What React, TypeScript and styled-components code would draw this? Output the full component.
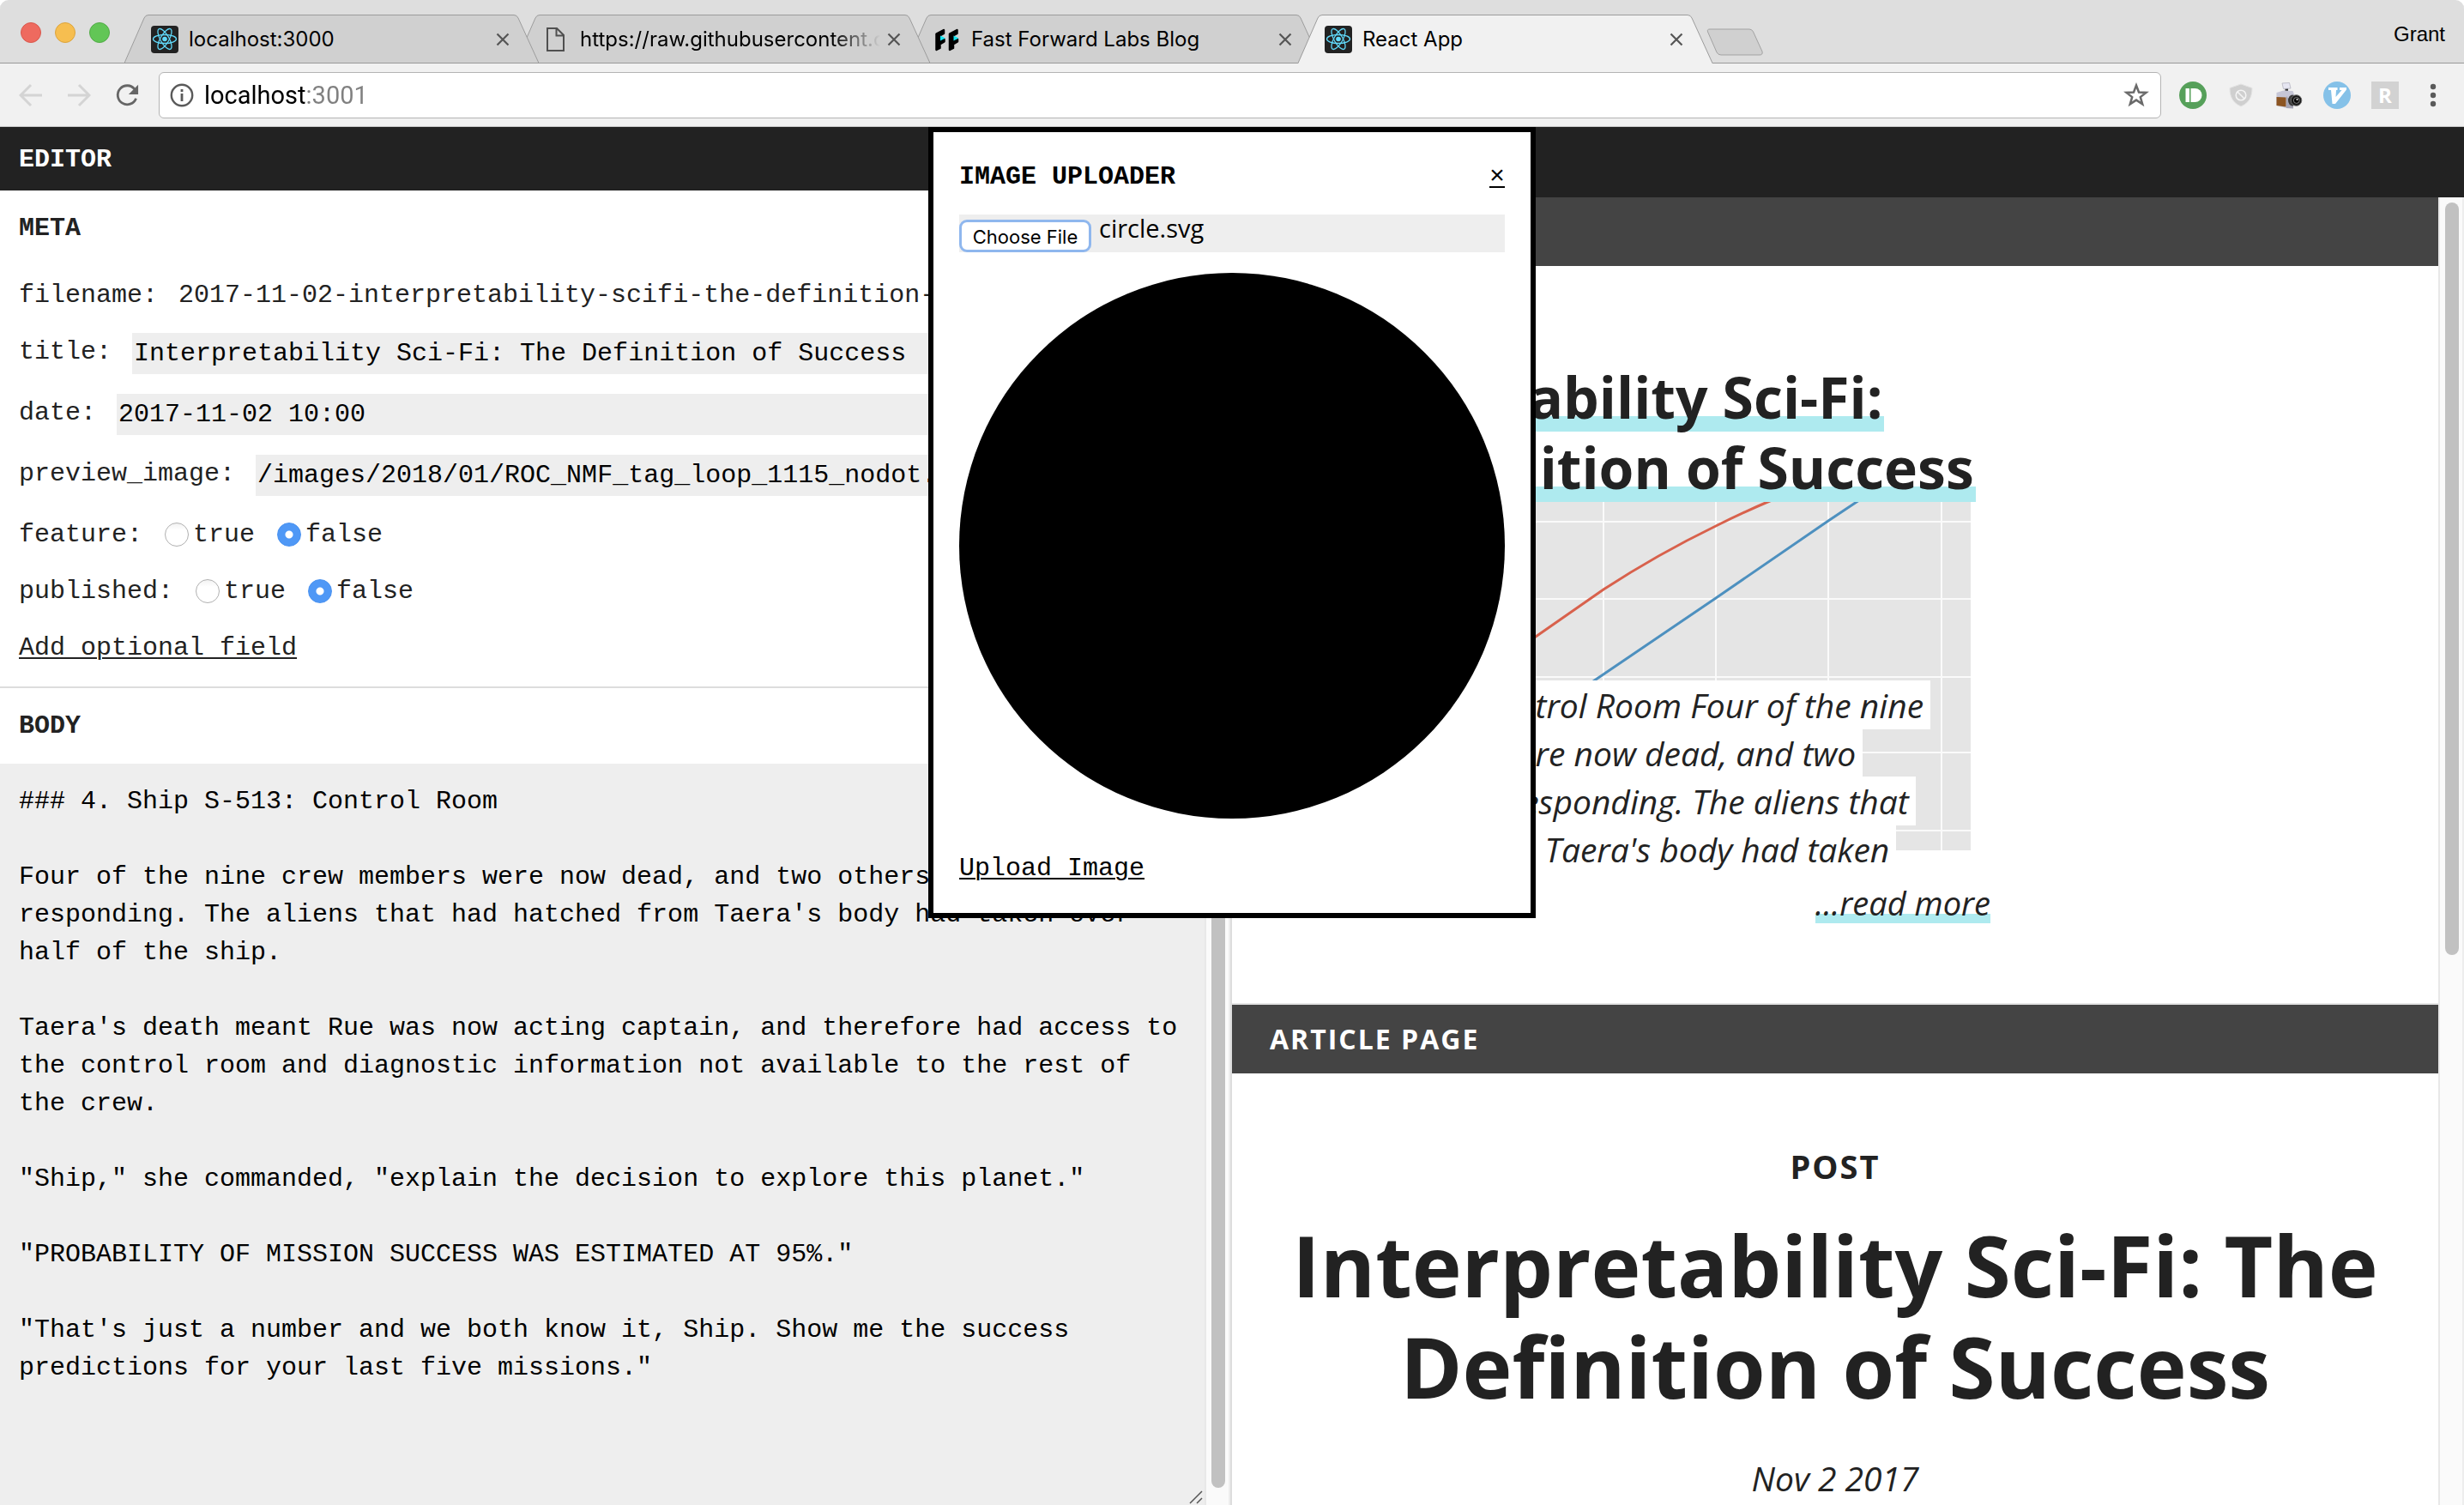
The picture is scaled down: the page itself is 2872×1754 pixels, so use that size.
import React, { useState } from "react";
import styled, { createGlobalStyle, css } from "styled-components";

const mono = '"Liberation Mono", "Courier New", monospace';
const sans = '"Open Sans", "Noto Sans", sans-serif';
const ui = 'Inter, Roboto, "Liberation Sans", sans-serif';

const GlobalStyle = createGlobalStyle`
  *, *::before, *::after { box-sizing: border-box; }
  html, body { margin: 0; background: #fff; }
  body { overflow: hidden; }
  h1, h2, h3, p { margin: 0; }
  button, input, textarea { font: inherit; color: inherit; margin: 0; }
`;

/* ---------- browser frame ---------- */

const Window = styled.div`
  display: grid;
  grid-template-rows: 74px 74px minmax(0, 1fr);
  height: 100vh;
  background: #fff;
`;

const TabStrip = styled.header`
  display: flex;
  align-items: flex-end;
  padding: 0 22px 0 24px;
  background: #dedede;
  border-radius: 10px 10px 0 0;
  box-shadow: inset 0 -1px 0 #999;
`;

const TrafficLights = styled.div`
  display: flex;
  gap: 16px;
  align-self: flex-start;
  padding: 26px 17px 0 0;
  width: 121px;
`;

const Light = styled.button<{ $fill: string; $edge: string }>`
  width: 24px;
  height: 24px;
  padding: 0;
  flex: none;
  border-radius: 50%;
  border: 1px solid ${(p) => p.$edge};
  background: ${(p) => p.$fill};
`;

const TabList = styled.nav`
  display: flex;
  flex: 1;
  min-width: 0;
  align-items: flex-end;
`;

const TabItem = styled.div<{ $active?: boolean; $order: number }>`
  position: relative;
  z-index: ${(p) => p.$order};
  display: flex;
  align-items: center;
  flex: 0 1 483px;
  min-width: 0;
  height: 57px;
  margin-right: -27px;
  padding: 0 34px 0 31px;
  font: 24px/32px ${ui};
  color: #000;
`;

const TabShape = styled.svg`
  position: absolute;
  inset: 0;
  width: 100%;
  height: 57px;
`;

const TabIcon = styled.span`
  position: relative;
  display: flex;
  flex: none;
  width: 32px;
  height: 32px;
  margin-right: 12px;
`;

const TabTitle = styled.span<{ $fade?: boolean }>`
  position: relative;
  flex: 1;
  min-width: 0;
  overflow: hidden;
  white-space: nowrap;
  ${(p) =>
    p.$fade &&
    css`
      mask-image: linear-gradient(to right, #000 calc(100% - 56px), transparent);
    `}
`;

const CloseTab = styled.button`
  position: relative;
  flex: none;
  display: flex;
  width: 16px;
  height: 16px;
  margin-left: 8px;
  padding: 0;
  border: 0;
  background: none;
`;

const NewTab = styled.button`
  display: flex;
  flex: none;
  margin: 0 0 9px 20px;
  padding: 0;
  border: 0;
  background: none;
`;

const Profile = styled.span`
  align-self: flex-start;
  padding-top: 24px;
  font: 24px/32px "Liberation Sans", Arial, sans-serif;
  color: #000;
`;

const Toolbar = styled.div`
  display: flex;
  align-items: center;
  padding: 0 8px 0 22px;
  background: #f1f1f1;
  border-bottom: 1px solid #c8c8c8;
`;

const IconButton = styled.button<{ $width?: number }>`
  display: flex;
  align-items: center;
  justify-content: center;
  flex: none;
  width: ${(p) => p.$width ?? 56}px;
  height: 32px;
  padding: 0;
  border: 0;
  background: none;
`;

const AddressBar = styled.label`
  display: flex;
  align-items: center;
  flex: 1;
  min-width: 0;
  height: 54px;
  padding: 0 13px 0 12px;
  margin: 0 9px 0 23px;
  border: 1px solid #b4b4b4;
  border-radius: 6px;
  background: #fff;
`;

const AddressInput = styled.input`
  flex: 1;
  min-width: 0;
  padding: 0;
  margin-left: 12px;
  border: 0;
  outline: 0;
  font: 29px/40px Roboto, Inter, sans-serif;
  color: transparent;
  background: linear-gradient(to right, #000 119px, #808080 119px);
  background-clip: text;
  -webkit-background-clip: text;
`;

/* ---------- page ---------- */

const Page = styled.main`
  position: relative;
  display: grid;
  grid-template-columns: minmax(0, 1fr) minmax(0, 1fr);
  min-height: 0;
`;

const Pane = styled.section<{ $divided?: boolean }>`
  display: flex;
  flex-direction: column;
  min-width: 0;
  min-height: 0;
  ${(p) =>
    p.$divided &&
    css`
      border-right: 2px solid #ddd;
    `}
`;

const EditorHeader = styled.h1`
  flex: none;
  padding: 16px 22px 14px;
  font: bold 30px/44px ${mono};
  color: #fff;
  background: #222;
  margin-right: -2px;
`;

const PreviewHeader = styled.div`
  flex: none;
  height: 82px;
  background: #222;
`;

const Scroller = styled.div`
  display: flex;
  flex: 1;
  min-height: 0;
`;

const ScrollContent = styled.div`
  display: flex;
  flex-direction: column;
  flex: 1;
  min-width: 0;
  overflow: hidden;
`;

const Track = styled.div`
  flex: none;
  width: 30px;
  padding: 6px;
  border-left: 2px solid #e8e8e8;
  border-right: 2px solid #ededed;
  background: #fafafa;
`;

const Thumb = styled.div<{ $length: string }>`
  width: 16px;
  height: ${(p) => p.$length};
  border-radius: 8px;
  background: #c1c1c1;
`;

const MetaSection = styled.section`
  flex: none;
  padding: 22px 22px 23px;
  border-bottom: 2px solid #ddd;
  font: 30px/44px ${mono};
  color: #222;
`;

const SectionTitle = styled.h2<{ $space: number }>`
  font: bold 30px/44px ${mono};
  color: #222;
  margin-bottom: ${(p) => p.$space}px;
`;

const FieldList = styled.form`
  display: flex;
  flex-direction: column;
  align-items: stretch;
  gap: 22px;
`;

const Field = styled.div`
  display: flex;
  gap: 24px;
  white-space: nowrap;
  overflow: hidden;
`;

const InputField = styled(Field)`
  height: 49px;
`;

const TextInput = styled.input`
  flex: 1;
  min-width: 0;
  height: 48px;
  padding: 2px;
  border: 0;
  outline: 0;
  background: #eee;
  color: #000;
`;

const RadioGroup = styled.fieldset`
  display: flex;
  align-items: center;
  gap: 26px;
  margin: 0;
  padding: 0;
  border: 0;
`;

const RadioLegend = styled.legend`
  float: left;
  padding: 0;
`;

const RadioLabel = styled.label`
  display: flex;
  align-items: center;
  gap: 5px;
`;

const Radio = styled.input`
  appearance: none;
  width: 28px;
  height: 28px;
  border: 1px solid #b0b0b0;
  border-radius: 50%;
  background: linear-gradient(#f2f2f2, #fff 30%);
  &:checked {
    border-color: #4a92f0;
    background: radial-gradient(circle, #fff 4px, #4f98f6 5px);
  }
`;

const TextButton = styled.button`
  align-self: flex-start;
  padding: 0;
  border: 0;
  background: none;
  font: 30px/44px ${mono};
  text-decoration: underline;
  text-decoration-thickness: 2px;
  text-underline-offset: 3px;
  cursor: pointer;
`;

const BodySection = styled.section`
  display: flex;
  flex-direction: column;
  flex: 1;
  min-height: 0;
`;

const BodyTitle = styled.div`
  padding: 22px 22px 0;
`;

const BodyEditor = styled.div`
  position: relative;
  display: flex;
  flex: 1;
  min-height: 0;
`;

const BodyText = styled.textarea`
  flex: 1;
  padding: 22px;
  border: 0;
  outline: 0;
  resize: none;
  overflow: hidden;
  background: #eee;
  font: 30px/44px ${mono};
  color: #000;
`;

const ResizeGrip = styled.svg`
  position: absolute;
  right: 2px;
  bottom: 1px;
`;

/* ---------- preview ---------- */

const PreviewCard = styled.article`
  position: relative;
  flex: none;
  padding: 111px 44px 91px;
  border-bottom: 2px solid #e5e5e5;
  font-family: ${sans};
  color: #222;
`;

const CardInner = styled.div`
  max-width: 840px;
`;

const Chart = styled.svg`
  position: absolute;
  left: 44px;
  top: 214px;
`;

const CardTitle = styled.h2`
  position: relative;
  margin-bottom: 209px;
  font: bold 66px/82px ${sans};
  white-space: nowrap;
`;

const Underlined = styled.span`
  padding-right: 2px;
  background: linear-gradient(
    transparent 16px,
    #fff 16px,
    #fff 68px,
    #aeeaef 68px,
    #aeeaef 86px,
    transparent 86px
  );
  box-decoration-break: clone;
  -webkit-box-decoration-break: clone;
`;

const Excerpt = styled.p`
  position: relative;
  font: italic 39px/56px ${sans};
  white-space: nowrap;
`;

const Highlight = styled.span`
  padding: 2px 8px 2px 0;
  background: #fff;
  box-decoration-break: clone;
  -webkit-box-decoration-break: clone;
`;

const MoreRow = styled.div`
  display: flex;
  justify-content: flex-end;
  margin-top: 8px;
  font: italic 38px/52px ${sans};
`;

const MoreLink = styled.a`
  color: #222;
  text-decoration: none;
  background: linear-gradient(
    transparent 39px,
    #aeeaef 39px,
    #aeeaef 50px,
    transparent 50px
  );
`;

const ArticleHeader = styled.h2`
  flex: none;
  height: 80px;
  padding: 0 44px;
  font: bold 32px/80px ${sans};
  letter-spacing: 2px;
  color: #fff;
  background: #444;
`;

const SubHeader = styled.div`
  flex: none;
  height: 80px;
  background: #444;
`;

const Article = styled.article`
  flex: none;
  padding: 86px 44px;
  text-align: center;
  color: #222;
`;

const Kicker = styled.p`
  font: bold 38px/44px ${sans};
  letter-spacing: 2px;
`;

const ArticleTitle = styled.h1`
  margin: 34px 0 44px;
  font: bold 98px/118px ${sans};
`;

const Dateline = styled.p`
  font: italic 39px/56px ${sans};
`;

/* ---------- dialog ---------- */

const Dialog = styled.div`
  position: absolute;
  top: 0;
  left: 50%;
  width: 708px;
  margin-left: -354px;
  padding: 30px;
  border: 6px solid #000;
  background: #fff;
  color: #000;
  font: 30px/44px ${mono};
  z-index: 10;
`;

const DialogHead = styled.div`
  display: flex;
  justify-content: space-between;
  margin-bottom: 22px;
`;

const DialogTitle = styled.h2`
  font: bold 30px/44px ${mono};
`;

const FileRow = styled.div`
  display: flex;
  align-items: flex-start;
  gap: 9px;
  height: 44px;
  margin-bottom: 24px;
  background: #eee;
`;

const HiddenFile = styled.input`
  position: absolute;
  width: 1px;
  height: 1px;
  opacity: 0;
`;

const FileButton = styled.label`
  width: 154px;
  height: 38px;
  margin-top: 6px;
  border: 3px solid #8fb7ee;
  border-radius: 9px;
  background: #fff;
  font: 22px/34px ${ui};
  text-align: center;
`;

const FileName = styled.span`
  font: 29px/32px ${sans};
`;

const Figure = styled.svg`
  display: block;
  width: 100%;
  margin-bottom: 36px;
`;

/* ---------- drawings ---------- */

const ReactMark = () => (
  <svg width="32" height="32" viewBox="0 0 32 32" aria-hidden="true">
    <rect width="32" height="32" rx="4" fill="#222" />
    <g fill="none" stroke="#61dafb" strokeWidth="1.3">
      <ellipse cx="16" cy="15.5" rx="13.5" ry="5" />
      <ellipse cx="16" cy="15.5" rx="13.5" ry="5" transform="rotate(60 16 15.5)" />
      <ellipse cx="16" cy="15.5" rx="13.5" ry="5" transform="rotate(120 16 15.5)" />
    </g>
    <circle cx="16" cy="15.5" r="2.8" fill="#61dafb" />
  </svg>
);

const PageMark = () => (
  <svg width="32" height="32" viewBox="0 0 32 32" aria-hidden="true">
    <path d="M6 3h11l8 8v18H6z M16.5 3v8.500h8" fill="none" stroke="#505050" strokeWidth="2" />
  </svg>
);

const ForwardMark = () => (
  <svg width="32" height="32" viewBox="0 0 32 32" aria-hidden="true">
    {[0, 15.5].map((x) => (
      <g key={x} transform={`translate(${x} 0)`}>
        <path
          d="M3.500 9.500L12 5v4L7.500 11.500V18l5-2v2.500l-5 3V26L3.500 28z"
          fill="#000"
          stroke="#000"
          strokeWidth="2.500"
          strokeLinejoin="round"
        />
        <path d="M8 11.500l6 3-6 3z" fill="#14e3ee" />
      </g>
    ))}
  </svg>
);

const CrossMark = () => (
  <svg width="16" height="16" viewBox="0 0 16 16" aria-hidden="true">
    <path d="M1.5 1.5l13 13M14.5 1.5l-13 13" stroke="#555" strokeWidth="2.2" />
  </svg>
);

const Arrow = ({ flip }: { flip?: boolean }) => (
  <svg width="28" height="28" viewBox="0 0 28 28" aria-hidden="true">
    <path
      d={flip ? "M1 14h25M14 2l12 12-12 12" : "M27 14H2M14 2L2 14l12 12"}
      fill="none"
      stroke="#d4d4d4"
      strokeWidth="3"
    />
  </svg>
);

const ReloadMark = () => (
  <svg width="30" height="30" viewBox="0 0 30 30" aria-hidden="true">
    <path d="M24.6 7.5A11.8 11.8 0 1 0 26.3 19" fill="none" stroke="#666" strokeWidth="3" />
    <path d="M29 2v12H17z" fill="#666" />
  </svg>
);

const InfoMark = () => (
  <svg width="28" height="28" viewBox="0 0 28 28" aria-hidden="true">
    <circle cx="14" cy="14" r="12.2" fill="none" stroke="#5a5a5a" strokeWidth="2.4" />
    <path d="M14 12v9M14 7v3" stroke="#5a5a5a" strokeWidth="2.8" />
  </svg>
);

const StarMark = () => (
  <svg width="30" height="30" viewBox="0 0 30 30" aria-hidden="true">
    <path
      d="M15 3.5l3 8 8.5.4-6.7 5.2 2.4 8.2L15 20.6l-7.2 4.7 2.4-8.2-6.7-5.2 8.5-.4z"
      fill="none"
      stroke="#6a6a6a"
      strokeWidth="2.5"
    />
  </svg>
);

const PushMark = () => (
  <svg width="32" height="32" viewBox="0 0 32 32" aria-hidden="true">
    <circle cx="16" cy="16" r="16" fill="#56a05a" />
    <rect x="7.5" y="8" width="4.5" height="16" rx=".5" fill="#fff" />
    <path d="M13.500 8h5a8 8 0 0 1 0 16h-5z" fill="#fff" />
  </svg>
);

const ShieldMark = () => (
  <svg width="32" height="32" viewBox="0 0 32 32" aria-hidden="true">
    <path d="M16 3l13 4.500c0 10-3 17-13 21.500C6 24.500 3 17.500 3 7.500z" fill="#cfcfcf" stroke="#e4e4e4" />
    <circle cx="16" cy="16" r="5.800" fill="none" stroke="#f4f4f4" strokeWidth="1.600" />
    <path d="M12 12l8 8" stroke="#f4f4f4" strokeWidth="1.600" />
  </svg>
);

const CameraMark = () => (
  <svg width="32" height="32" viewBox="0 0 32 32" aria-hidden="true">
    <path d="M11.5 8h3.500v4h-3.500z" fill="#333" />
    <path d="M8 2l8.500-.5 1.500 6.500-8.500.5z" fill="#e6e6f2" stroke="#b4b4c0" strokeWidth=".8" />
    <path d="M1.500 13l8-2.500 11 .5 1.500 4-1 15.500-8 .5L1.500 28z" fill="#c6c6d6" />
    <path d="M1.500 18l11 .5v11L1.500 28z" fill="#8c5522" />
    <path d="M13 17v14l8 .5V27z" fill="#a5a5b4" />
    <ellipse cx="20" cy="22" rx="5" ry="6.500" fill="#3a3a3a" />
    <circle cx="24.500" cy="22" r="6.300" fill="#191919" stroke="#6f6f6f" />
    <circle cx="24.800" cy="22" r="3.400" fill="#000" stroke="#9a9a9a" strokeWidth=".8" />
    <circle cx="25.500" cy="21" r="1" fill="#eee" />
  </svg>
);

const VimMark = () => (
  <svg width="32" height="32" viewBox="0 0 32 32" aria-hidden="true">
    <circle cx="16" cy="16" r="16" fill="#85c1e8" />
    <path d="M6 7h10.500v3H15l-.5 8L21.500 10H19V7h8v2.500L14 26h-3.500L9 10H6z" fill="#fff" />
  </svg>
);

const LetterTile = styled.span`
  display: flex;
  align-items: center;
  justify-content: center;
  width: 32px;
  height: 32px;
  background: #d2d2d2;
  color: #fff;
  font: bold 24px/32px ${sans};
`;

const MenuMark = () => (
  <svg width="8" height="28" viewBox="0 0 8 28" aria-hidden="true">
    <g fill="#5a5a5a">
      <circle cx="4" cy="4" r="3.200" />
      <circle cx="4" cy="14" r="3.200" />
      <circle cx="4" cy="24" r="3.200" />
    </g>
  </svg>
);

/* ---------- parts ---------- */

type TabProps = {
  title: string;
  icon: React.ReactNode;
  order: number;
  active?: boolean;
  fade?: boolean;
};

const Tab = ({ title, icon, order, active, fade }: TabProps) => (
  <TabItem $order={order} $active={active}>
    <TabShape viewBox="0 0 483 57" preserveAspectRatio="none" aria-hidden="true">
      <path
        d="M0 57L23 4Q24.500.5 28 .5H454Q457.500.5 459 4L483 57z"
        fill={active ? "#f1f1f1" : "#d0d0d0"}
      />
      <path
        d="M0 56.500L23 4Q24.500.5 28 .5H454Q457.500.5 459 4L483 56.500"
        fill="none"
        stroke="#9c9c9c"
      />
      {!active && <path d="M0 56.500H483" stroke="#999" />}
    </TabShape>
    <TabIcon>{icon}</TabIcon>
    <TabTitle $fade={fade}>{title}</TabTitle>
    <CloseTab aria-label={`Close ${title}`}>
      <CrossMark />
    </CloseTab>
  </TabItem>
);

const BoolField = ({ name }: { name: string }) => {
  const [value, setValue] = useState(false);
  return (
    <RadioGroup>
      <RadioLegend>{name}:</RadioLegend>
      <RadioLabel>
        <Radio type="radio" name={name} checked={value} onChange={() => setValue(true)} />
        true
      </RadioLabel>
      <RadioLabel>
        <Radio type="radio" name={name} checked={!value} onChange={() => setValue(false)} />
        false
      </RadioLabel>
    </RadioGroup>
  );
};

const LineField = ({ name, value }: { name: string; value: string }) => (
  <InputField>
    <label htmlFor={name}>{name}:</label>
    <TextInput id={name} defaultValue={value} />
  </InputField>
);

const bodyText = `### 4. Ship S-513: Control Room

Four of the nine crew members were now dead, and two others were not responding. The aliens that had hatched from Taera's body had taken over half of the ship.

Taera's death meant Rue was now acting captain, and therefore had access to the control room and diagnostic information not available to the rest of the crew.

"Ship," she commanded, "explain the decision to explore this planet."

"PROBABILITY OF MISSION SUCCESS WAS ESTIMATED AT 95%."

"That's just a number and we both know it, Ship. Show me the success predictions for your last five missions."`;

const columns = [126, 258, 389, 520, 651, 783];
const rows = [84, 174, 265, 353, 444];

const PreviewChart = () => (
  <Chart width="817" height="467" viewBox="0 0 817 467" aria-hidden="true">
    <rect width="817" height="467" fill="#e5e5e5" />
    <g stroke="#fafafa" strokeWidth="2">
      {columns.map((x) => (
        <path key={x} d={`M${x} 0V467`} />
      ))}
      {rows.map((y) => (
        <path key={y} d={`M0 ${y}H817`} />
      ))}
    </g>
    <path
      d="M230 280Q270 246 310 218Q350 190 389 163Q452 122 520 89Q552 73 585 59L640 38"
      fill="none"
      stroke="#d8614c"
      strokeWidth="3"
    />
    <path d="M270 343L377 270L520 173L651 83L687 59L730 30" fill="none" stroke="#4d90bf" strokeWidth="3" />
  </Chart>
);

const EditorPane = () => (
  <Pane $divided>
    <EditorHeader>EDITOR</EditorHeader>
    <Scroller>
      <ScrollContent>
        <MetaSection>
          <SectionTitle $space={34}>META</SectionTitle>
          <FieldList>
            <Field>
              <span>filename:</span>
              <span>2017-11-02-interpretability-scifi-the-definition-of-success.md</span>
            </Field>
            <LineField name="title" value="Interpretability Sci-Fi: The Definition of Success" />
            <LineField name="date" value="2017-11-02 10:00" />
            <LineField name="preview_image" value="/images/2018/01/ROC_NMF_tag_loop_1115_nodot.png" />
            <BoolField name="feature" />
            <BoolField name="published" />
            <TextButton type="button">Add optional field</TextButton>
          </FieldList>
        </MetaSection>
        <BodySection>
          <BodyTitle>
            <SectionTitle $space={22} id="body-title">
              BODY
            </SectionTitle>
          </BodyTitle>
          <BodyEditor>
            <BodyText aria-labelledby="body-title" defaultValue={bodyText} spellCheck={false} />
            <ResizeGrip width="16" height="16" viewBox="0 0 16 16" aria-hidden="true">
              <path d="M1 15L15 1M9 15l6-6" stroke="#555" strokeWidth="1.500" />
            </ResizeGrip>
          </BodyEditor>
        </BodySection>
      </ScrollContent>
      <Track>
        <Thumb $length="calc(100% - 14px)" />
      </Track>
    </Scroller>
  </Pane>
);

const PreviewPane = () => (
  <Pane>
    <PreviewHeader />
    <Scroller>
      <ScrollContent>
        <SubHeader />
        <PreviewCard>
          <PreviewChart />
          <CardInner>
            <CardTitle>
              <Underlined>
                Interpretability Sci-Fi:
                <br />
                The Definition of Success
              </Underlined>
            </CardTitle>
            <Excerpt>
              <Highlight>
                4. Ship S-513: Control Room Four of the nine
                <br />
                crew members were now dead, and two
                <br />
                others were not responding. The aliens that
                <br />
                had hatched from Taera's body had taken
              </Highlight>
            </Excerpt>
            <MoreRow>
              <MoreLink href="#article">...read more</MoreLink>
            </MoreRow>
          </CardInner>
        </PreviewCard>
        <ArticleHeader>ARTICLE PAGE</ArticleHeader>
        <Article id="article">
          <Kicker>POST</Kicker>
          <ArticleTitle>Interpretability Sci-Fi: The Definition of Success</ArticleTitle>
          <Dateline>Nov 2 2017</Dateline>
        </Article>
      </ScrollContent>
      <Track>
        <Thumb $length="58%" />
      </Track>
    </Scroller>
  </Pane>
);

const ImageUploader = () => (
  <Dialog role="dialog" aria-labelledby="uploader-title">
    <DialogHead>
      <DialogTitle id="uploader-title">IMAGE UPLOADER</DialogTitle>
      <TextButton aria-label="Close">×</TextButton>
    </DialogHead>
    <FileRow>
      <HiddenFile type="file" id="image-file" />
      <FileButton htmlFor="image-file">Choose File</FileButton>
      <FileName>circle.svg</FileName>
    </FileRow>
    <Figure viewBox="0 0 636 636" role="img" aria-label="circle.svg">
      <circle cx="318" cy="318" r="318" />
    </Figure>
    <TextButton>Upload Image</TextButton>
  </Dialog>
);

export default function App() {
  return (
    <>
      <GlobalStyle />
      <Window>
        <TabStrip>
          <TrafficLights>
            <Light $fill="#ee6a5f" $edge="#d9574c" aria-label="Close window" />
            <Light $fill="#f6be50" $edge="#dca43c" aria-label="Minimise window" />
            <Light $fill="#62c656" $edge="#52ab47" aria-label="Zoom window" />
          </TrafficLights>
          <TabList>
            <Tab title="localhost:3000" icon={<ReactMark />} order={3} />
            <Tab title="https://raw.githubusercontent.com" icon={<PageMark />} order={2} fade />
            <Tab title="Fast Forward Labs Blog" icon={<ForwardMark />} order={1} />
            <Tab title="React App" icon={<ReactMark />} order={4} active />
            <NewTab aria-label="New tab">
              <svg width="68" height="32" viewBox="0 0 68 32" aria-hidden="true">
                <path
                  d="M4 1H50Q53 1 54.500 4L65 27Q66 31 62 31H17Q13.500 31 12 28L1.500 4Q.5 1 4 1z"
                  fill="#d0d0d0"
                  stroke="#a2a2a2"
                />
              </svg>
            </NewTab>
          </TabList>
          <Profile>Grant</Profile>
        </TabStrip>
        <Toolbar>
          <IconButton $width={28} aria-label="Back">
            <Arrow />
          </IconButton>
          <IconButton $width={84} aria-label="Forward">
            <Arrow flip />
          </IconButton>
          <IconButton $width={28} aria-label="Reload">
            <ReloadMark />
          </IconButton>
          <AddressBar>
            <InfoMark />
            <AddressInput aria-label="Address" defaultValue="localhost:3001" />
            <StarMark />
          </AddressBar>
          <IconButton aria-label="Pushbullet">
            <PushMark />
          </IconButton>
          <IconButton aria-label="Shield">
            <ShieldMark />
          </IconButton>
          <IconButton aria-label="Camera">
            <CameraMark />
          </IconButton>
          <IconButton aria-label="Vimium">
            <VimMark />
          </IconButton>
          <IconButton aria-label="R">
            <LetterTile>R</LetterTile>
          </IconButton>
          <IconButton aria-label="Menu">
            <MenuMark />
          </IconButton>
        </Toolbar>
        <Page>
          <EditorPane />
          <PreviewPane />
          <ImageUploader />
        </Page>
      </Window>
    </>
  );
}
